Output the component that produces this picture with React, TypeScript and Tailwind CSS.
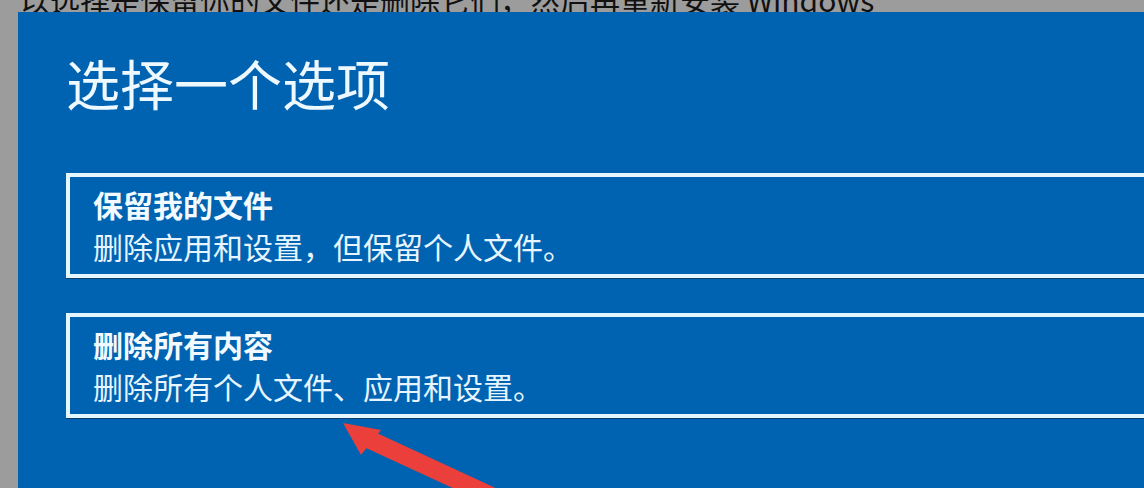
const options = [
  { title: '保留我的文件', desc: '删除应用和设置，但保留个人文件。' },
  { title: '删除所有内容', desc: '删除所有个人文件、应用和设置。' },
]

function OptionBox({ title, desc }: { title: string; desc: string }) {
  return (
    <div className="w-[1120px] border-4 border-[#e4f6ff] pl-[23px] pt-[6px] pb-[7px] shadow-[0_1px_0_#0b3f6b]">
      <p className="text-[30px] font-bold leading-[42px] text-[#f2faff]">{title}</p>
      <p className="text-[30px] leading-[42px] text-[#e6f5ff]">{desc}</p>
    </div>
  )
}

function Arrow() {
  return (
    <svg
      className="pointer-events-none absolute left-0 top-0"
      width="1144"
      height="488"
      viewBox="0 0 1144 488"
    >
      <line x1="500" y1="500" x2="366" y2="438" stroke="#ea3f3a" strokeWidth="18" />
      <polygon points="343,423 381,430 361,455" fill="#ea3f3a" />
    </svg>
  )
}

export default function App() {
  return (
    <div className="relative h-[488px] w-[1144px] overflow-hidden bg-[#9c9c9c] font-['Noto_Sans_CJK_SC','Noto_Sans',sans-serif]">
      <div className="flex h-[12px] items-end overflow-hidden pl-[20px]">
        <p className="whitespace-nowrap text-[30px] leading-[26px] text-[#111]">
          以选择是保留你的文件还是删除它们，然后再重新安装 Windows
        </p>
      </div>
      <div className="flex h-[476px]">
        <div className="w-[18px] shrink-0" />
        <div className="flex-1 overflow-hidden bg-[#0063b1] pl-[48px] pt-[44px]">
          <h1 className="text-[54px] font-normal leading-none text-[#eef8ff]">选择一个选项</h1>
          <div className="mt-[63px] flex flex-col gap-[35px]">
            {options.map((o) => (
              <OptionBox key={o.title} title={o.title} desc={o.desc} />
            ))}
          </div>
        </div>
      </div>
      <Arrow />
    </div>
  )
}
